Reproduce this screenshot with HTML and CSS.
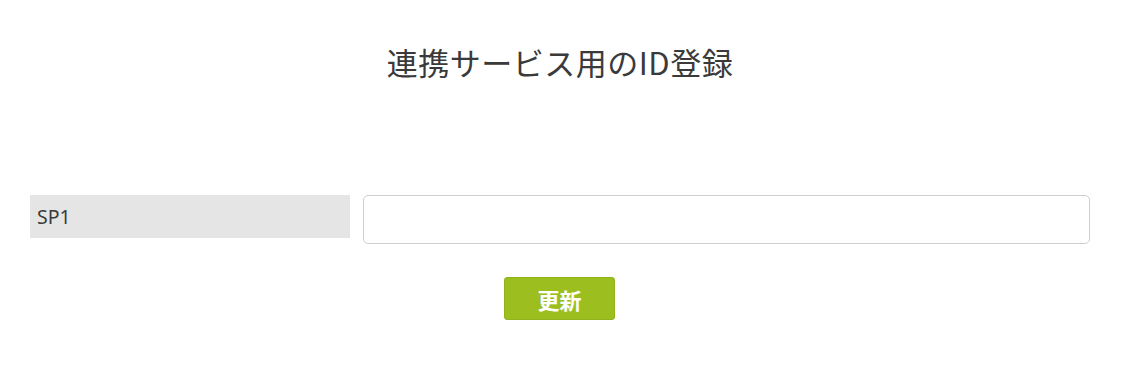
FILE: index.html
```html
<!DOCTYPE html>
<html lang="ja">
<head>
<meta charset="utf-8">
<link rel="stylesheet" href="styles.css">
</head>
<body>
<div class="page">
  <h1 class="title">連携サービス用のID登録</h1>
  <form class="form">
    <div class="row">
      <div class="label">SP1</div>
      <input class="field" type="text">
    </div>
    <div class="actions">
      <button class="btn" type="button">更新</button>
    </div>
  </form>
</div>
</body>
</html>
```
FILE: styles.css
```css
html, body {
  margin: 0;
  padding: 0;
  background: #fff;
}
body {
  font-family: "Noto Sans CJK JP", "Noto Sans", sans-serif;
  color: #333;
}
.page {
  padding: 0 40px 0 30px;
}
.title {
  margin: 0;
  padding-top: 39px;
  height: 195px;
  box-sizing: border-box;
  text-align: center;
  font-size: 31px;
  font-weight: 400;
  line-height: 46px;
  letter-spacing: 0.5px;
  color: #3a3a3a;
}
.row {
  display: flex;
  align-items: flex-start;
  gap: 13px;
}
.label {
  width: 320px;
  height: 43px;
  background: #e5e5e5;
  box-sizing: border-box;
  padding-left: 7px;
  display: flex;
  align-items: center;
  font-family: "Noto Sans", sans-serif;
  font-size: 19.5px;
  color: #3a3a3a;
}
.field {
  flex: 1;
  height: 49px;
  box-sizing: border-box;
  border: 1px solid #cfcfcf;
  border-radius: 5px;
  margin: 0;
  font-size: 16px;
}
.actions {
  display: flex;
  justify-content: center;
  padding-top: 33px;
}
.btn {
  width: 111px;
  height: 43px;
  background: #9cbf1f;
  border: 1px solid #92b21c;
  border-radius: 3px;
  color: #fff;
  font-family: "Noto Sans CJK JP", sans-serif;
  font-size: 22px;
  font-weight: 700;
  padding: 0;
  margin-left: -1px;
}
```
